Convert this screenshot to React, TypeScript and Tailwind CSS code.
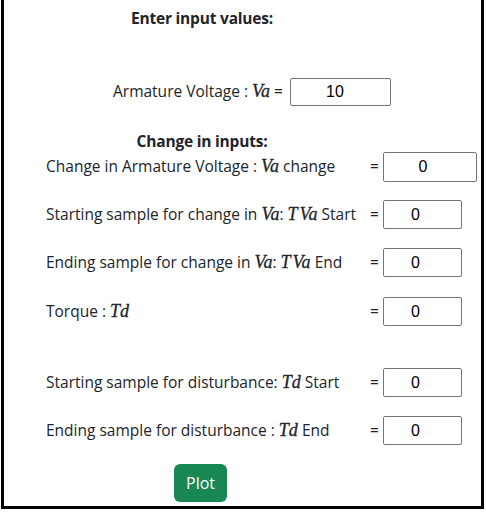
import React from "react";

const M = ({ children }: { children: React.ReactNode }) => (
  <span className="font-['Liberation_Serif',serif] italic text-[18px] leading-none [-webkit-text-stroke:0.3px_currentColor]">
    {children}
  </span>
);

const TVa = () => (
  <M>
    <span className="mr-[2px]">T</span>Va
  </M>
);

const rows = [
  { label: <>Change in Armature Voltage : <M>Va</M> change</>, wide: true, mt: "mt-0" },
  { label: <>Starting sample for change in <M>Va</M>: <TVa /> Start</>, mt: "mt-[18px]" },
  { label: <>Ending sample for change in <M>Va</M>: <TVa /> End</>, mt: "mt-[19px]" },
  { label: <>Torque : <M>Td</M></>, mt: "mt-[20px]" },
  { label: <>Starting sample for disturbance: <M>Td</M> Start</>, mt: "mt-[42px]" },
  { label: <>Ending sample for disturbance : <M>Td</M> End</>, mt: "mt-[19px]" },
];

export default function App() {
  return (
    <div className="w-[486px] h-[513px] bg-white font-['Open_Sans',sans-serif] text-[15.5px] text-[#212529]">
      <div className="ml-[1px] w-[483px] h-[509px] border-x-[3px] border-b-[3px] border-black flex flex-col">
        <div className="w-[396px] mt-[6px] text-center font-bold text-[15.5px] tracking-[-0.2px] leading-6">Enter input values:</div>

        <div className="mt-[48px] ml-[109px] flex items-center h-[28px]">
          <span className="w-[177px] whitespace-nowrap">
            Armature Voltage : <M>Va</M> =
          </span>
          <input
            readOnly
            value="10"
            className="w-[101px] h-[28px] border border-[#767676] rounded-[2px] text-center pr-[11px] font-['Liberation_Sans',sans-serif] text-[16px] text-black outline-none"
          />
        </div>

        <div className="w-[396px] mt-[24px] text-center font-bold text-[15.5px] tracking-[-0.2px] leading-[22px]">Change in inputs:</div>

        {rows.map((r, i) => (
          <div key={i} className={`${r.mt} ml-[42px] flex items-center`}>
            <div className="w-[324px] whitespace-nowrap">{r.label}</div>
            <span className="w-[8px]">=</span>
            <input
              readOnly
              value="0"
              className={`ml-[5px] ${r.wide ? "w-[94px] h-[30px]" : "w-[79px] h-[29px]"} border border-[#767676] rounded-[2px] text-center pr-[14px] font-['Liberation_Sans',sans-serif] text-[16px] text-black outline-none`}
            />
          </div>
        ))}

        <button className="mt-[19px] ml-[170px] w-[53px] h-[38px] rounded-md bg-[#198754] text-white text-[16px]">
          Plot
        </button>
      </div>
    </div>
  );
}
